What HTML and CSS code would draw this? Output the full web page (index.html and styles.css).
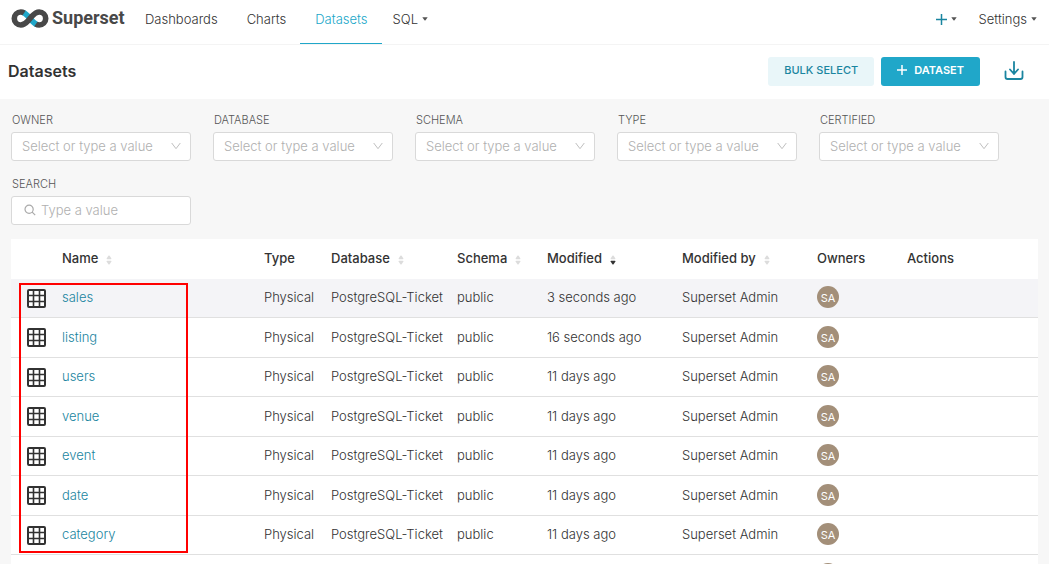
FILE: index.html
```html
<!DOCTYPE html>
<html lang="en">
<head>
<meta charset="utf-8">
<meta name="viewport" content="width=device-width, initial-scale=1">
<title>Datasets - Superset</title>
<link rel="stylesheet" href="styles.css">
</head>
<body>
<svg class="sprite" aria-hidden="true">
  <symbol id="grid" viewBox="0 0 19 19">
    <rect x="1" y="1" width="17" height="17" rx="1" fill="#fff" stroke="#323232" stroke-width="2"/>
    <path d="M6.5 1v17M12.5 1v17M1 6.5h17M1 12.5h17" fill="none" stroke="#323232" stroke-width="1.6"/>
  </symbol>
  <symbol id="sort" viewBox="0 0 6 10">
    <path d="M.6 3.6 2.4.8q.6-.8 1.2 0L5.400 3.600q.1.600-.5.600H1.100q-.6 0-.5-.6z"/>
    <path class="sort-down" d="M.6 6.400 2.400 9.200q.6.800 1.200 0L5.400 6.400q.1-.6-.5-.6H1.100q-.6 0-.5.600z"/>
  </symbol>
  <symbol id="chevron" viewBox="0 0 10 8">
    <path d="M.7 1 5 6.700 9.300 1" fill="none" stroke="#bfbfbf" stroke-width="1"/>
  </symbol>
  <symbol id="caret" viewBox="0 0 6 4">
    <path d="M.3.300h5.400L3.500 3.300q-.5.500-1 0z" fill="#555"/>
  </symbol>
</svg>
<div class="app">
  <header class="topbar">
    <a class="brand" href="#">
      <svg class="brand-mark" viewBox="0 0 37 19" aria-hidden="true">
        <g fill="none" stroke-width="5.600">
          <path d="M11.500 3.500C14.500 4.500 16 6.500 18.500 9.500S22.500 14.500 25.500 15.600" stroke="#20a7c9"/>
          <path d="M12.600 4C11.500 3.300 10.500 3 9.300 3a6.500 6.500 0 0 0 0 13c3.200 0 5.200-2 7.200-4.200l4-4.600C22.500 5 24.500 3 27.700 3a6.500 6.500 0 0 1 0 13c-1.200 0-2.300-.3-3.300-1" stroke="#484848"/>
        </g>
      </svg>
      <span>Superset</span>
    </a>
    <nav class="menu" aria-label="Main">
      <a href="#">Dashboards</a>
      <a href="#">Charts</a>
      <a class="active" href="#" aria-current="page">Datasets</a>
      <button class="drop" type="button">SQL <svg class="caret" aria-hidden="true"><use href="#caret"/></svg></button>
    </nav>
    <div class="tools">
      <button class="drop" type="button" aria-label="New">
        <svg class="plus" viewBox="0 0 11 11" aria-hidden="true"><path d="M5.500 0v11M0 5.500h11" stroke="#1a85a0" stroke-width="1.500"/></svg>
        <svg class="caret" aria-hidden="true"><use href="#caret"/></svg>
      </button>
      <button class="drop" type="button">Settings <svg class="caret" aria-hidden="true"><use href="#caret"/></svg></button>
    </div>
  </header>

  <section class="titlebar">
    <h1>Datasets</h1>
    <div class="actions">
      <button class="btn btn-light" type="button">BULK SELECT</button>
      <button class="btn btn-primary" type="button"><svg class="btn-plus" viewBox="0 0 10 10" aria-hidden="true"><path d="M5 0v10M0 5h10" stroke="#fff" stroke-width="1.500"/></svg>DATASET</button>
      <button class="import" type="button" aria-label="Import datasets">
        <svg viewBox="0 0 20 20" aria-hidden="true"><path d="M10 1v12M6 8.500l4 4.300 4-4.300M1.500 10.500v5.500q0 2 2 2h13q2 0 2-2v-5.500" fill="none" stroke="#1a85a0" stroke-width="1.800" stroke-linecap="round" stroke-linejoin="round"/></svg>
      </button>
    </div>
  </section>

  <main class="content">
    <form class="filters">
      <div class="field"><label for="owner">OWNER</label><div class="control"><select id="owner"><option>Select or type a value</option></select><svg class="chevron" aria-hidden="true"><use href="#chevron"/></svg></div></div>
      <div class="field"><label for="database">DATABASE</label><div class="control"><select id="database"><option>Select or type a value</option></select><svg class="chevron" aria-hidden="true"><use href="#chevron"/></svg></div></div>
      <div class="field"><label for="schema">SCHEMA</label><div class="control"><select id="schema"><option>Select or type a value</option></select><svg class="chevron" aria-hidden="true"><use href="#chevron"/></svg></div></div>
      <div class="field"><label for="type">TYPE</label><div class="control"><select id="type"><option>Select or type a value</option></select><svg class="chevron" aria-hidden="true"><use href="#chevron"/></svg></div></div>
      <div class="field"><label for="certified">CERTIFIED</label><div class="control"><select id="certified"><option>Select or type a value</option></select><svg class="chevron" aria-hidden="true"><use href="#chevron"/></svg></div></div>
      <div class="field"><label for="search">SEARCH</label><div class="control"><svg class="lens" viewBox="0 0 12 12" aria-hidden="true"><path d="m8.200 8.200 3 3M9.200 5.200a4.100 4.100 0 1 1-8.200 0 4.100 4.100 0 0 1 8.200 0z" fill="none" stroke="#aaa" stroke-width="1.200"/></svg><input id="search" type="text" placeholder="Type a value"></div></div>
    </form>

    <div class="table-wrap">
      <table>
        <colgroup><col class="c-icon"><col><col class="c-type"><col class="c-database"><col class="c-schema"><col class="c-modified"><col class="c-by"><col class="c-owners"><col class="c-actions"></colgroup>
        <thead>
          <tr>
            <th></th>
            <th>Name<svg class="sort" aria-hidden="true"><use href="#sort"/></svg></th>
            <th>Type</th>
            <th>Database<svg class="sort" aria-hidden="true"><use href="#sort"/></svg></th>
            <th>Schema<svg class="sort" aria-hidden="true"><use href="#sort"/></svg></th>
            <th aria-sort="descending">Modified<svg class="sort sorted" aria-hidden="true"><use href="#sort"/></svg></th>
            <th>Modified by<svg class="sort" aria-hidden="true"><use href="#sort"/></svg></th>
            <th>Owners</th>
            <th>Actions</th>
          </tr>
        </thead>
        <tbody>
          <tr class="hovered"><td><svg class="grid"><use href="#grid"/></svg></td><td><a href="#">sales</a></td><td>Physical</td><td>PostgreSQL-Ticket</td><td>public</td><td>3 seconds ago</td><td>Superset Admin</td><td><span class="avatar">SA</span></td><td></td></tr>
          <tr><td><svg class="grid"><use href="#grid"/></svg></td><td><a href="#">listing</a></td><td>Physical</td><td>PostgreSQL-Ticket</td><td>public</td><td>16 seconds ago</td><td>Superset Admin</td><td><span class="avatar">SA</span></td><td></td></tr>
          <tr><td><svg class="grid"><use href="#grid"/></svg></td><td><a href="#">users</a></td><td>Physical</td><td>PostgreSQL-Ticket</td><td>public</td><td>11 days ago</td><td>Superset Admin</td><td><span class="avatar">SA</span></td><td></td></tr>
          <tr><td><svg class="grid"><use href="#grid"/></svg></td><td><a href="#">venue</a></td><td>Physical</td><td>PostgreSQL-Ticket</td><td>public</td><td>11 days ago</td><td>Superset Admin</td><td><span class="avatar">SA</span></td><td></td></tr>
          <tr><td><svg class="grid"><use href="#grid"/></svg></td><td><a href="#">event</a></td><td>Physical</td><td>PostgreSQL-Ticket</td><td>public</td><td>11 days ago</td><td>Superset Admin</td><td><span class="avatar">SA</span></td><td></td></tr>
          <tr><td><svg class="grid"><use href="#grid"/></svg></td><td><a href="#">date</a></td><td>Physical</td><td>PostgreSQL-Ticket</td><td>public</td><td>11 days ago</td><td>Superset Admin</td><td><span class="avatar">SA</span></td><td></td></tr>
          <tr><td><svg class="grid"><use href="#grid"/></svg></td><td><a href="#">category</a></td><td>Physical</td><td>PostgreSQL-Ticket</td><td>public</td><td>11 days ago</td><td>Superset Admin</td><td><span class="avatar">SA</span></td><td></td></tr>
          <tr><td></td><td></td><td></td><td></td><td></td><td></td><td></td><td><span class="avatar"></span></td><td></td></tr>
        </tbody>
      </table>
      <div class="highlight"></div>
    </div>
  </main>
</div>
</body>
</html>
```
FILE: styles.css
```css
* { box-sizing: border-box; }
body { margin: 0; background: #f7f7f7; color: #323232; font: 300 13px/18px Inter, "Liberation Sans", sans-serif; }
a { color: inherit; text-decoration: none; }
button { border: 0; margin: 0; background: none; color: inherit; font: inherit; cursor: pointer; }
svg { display: block; flex: none; }
.sprite { position: absolute; width: 0; height: 0; }
.app { height: 100vh; overflow: hidden; }

.topbar { display: flex; background: #fff; border-bottom: 1px solid #f4f4f4; height: 45px; padding: 0 12px 0 11px; }
.brand { display: flex; align-items: center; gap: 3px; width: 119px; padding-bottom: 8px; color: #484848; font: 700 18px/20px Roboto, sans-serif; }
.brand-mark { width: 38px; height: 19px; }
.menu, .tools { display: flex; }
.menu a { padding: 10px 14px 0 15px; height: 44px; }
.menu .active { color: #20a7c9; border-bottom: 1px solid #20a7c9; }
.drop { display: flex; align-items: center; gap: 4px; height: 38px; padding: 0 11px; }
.caret { width: 6px; height: 4px; }
.tools { margin-left: auto; }
.tools .drop:last-child { padding-right: 0; }
.plus { width: 11px; height: 11px; }

.titlebar { display: flex; align-items: center; justify-content: space-between; height: 54px; background: #fff; padding: 0 25px 2px 8px; }
h1 { margin: 0; font-size: 16px; line-height: 20px; font-weight: 600; }
.actions { display: flex; align-items: center; gap: 7px; }
.btn { display: flex; align-items: center; justify-content: center; gap: 7px; height: 29px; padding: 0 16px 2px; border-radius: 3px; font-size: 11px; font-weight: 500; }
.btn-light { background: #e9f6f9; color: #1a85a0; }
.btn-primary { background: #20a7c9; color: #fff; font-weight: 600; }
.btn-plus { width: 10px; height: 10px; }
.import { padding: 0; margin-left: 17px; }
.import svg { width: 20px; height: 20px; }

.content { padding: 13px 11px 0; }
.filters { display: flex; flex-wrap: wrap; gap: 15px 22px; }
.field { width: 180px; }
.field label { display: block; padding-left: 1px; margin-bottom: 4px; color: #555; font-size: 11px; line-height: 16px; }
.control { display: flex; align-items: center; height: 29px; padding: 0 9px 1px 10px; background: #fff; border: 1px solid #d9d9d9; border-radius: 3px; }
.control select, .control input { appearance: none; flex: 1; min-width: 0; border: 0; padding: 0; background: none; color: #b0b0b0; font: inherit; outline: 0; }
.control input::placeholder { color: #b0b0b0; opacity: 1; }
.chevron { width: 10px; height: 8px; }
.lens { width: 12px; height: 12px; margin: 0 5px 0 2px; }

.table-wrap { position: relative; margin: 14px 0 0; }
table { width: 100%; table-layout: fixed; border-collapse: separate; border-spacing: 0; background: #fff; }
.c-icon { width: 37px; }
.c-type { width: 67px; }
.c-database { width: 126px; }
.c-schema { width: 90px; }
.c-modified, .c-by { width: 135px; }
.c-owners { width: 90px; }
.c-actions { width: 145px; }
th, td { padding: 0 0 2px 14px; text-align: left; white-space: nowrap; vertical-align: middle; }
th { height: 40px; font-weight: 500; }
td { height: 40px; border-bottom: 1px solid #e0e0e0; }
tr:nth-child(odd) td { height: 39px; }
td:first-child { padding: 0 0 0 16px; }
td a { color: #1a85a0; }
.hovered td { background: #f4f4f7; }
.sort { --down: #dcdcdc; display: inline-block; width: 6px; height: 10px; margin-left: 8px; vertical-align: -2px; fill: #dcdcdc; }
.sorted { --down: #323232; }
.sort-down { fill: var(--down); }
.grid { width: 19px; height: 19px; }
.avatar { display: flex; align-items: center; justify-content: center; width: 22px; height: 22px; padding-top: 2px; border-radius: 50%; background: #a38f79; color: #fff; font-size: 11px; font-weight: 400; }
.highlight { position: absolute; left: 8px; top: 44px; width: 169px; height: 270px; border: 2px solid #f00; pointer-events: none; }
```
